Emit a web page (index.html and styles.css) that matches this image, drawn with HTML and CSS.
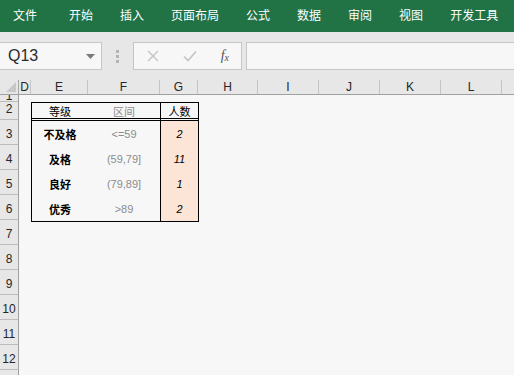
FILE: index.html
```html
<!DOCTYPE html>
<html lang="zh-CN">
<head>
    <meta charset="UTF-8">
    <meta name="viewport" content="width=device-width, initial-scale=1.0">
    <title>成绩统计</title>
    <link rel="stylesheet" href="styles.css">
</head>
<body>
    <!-- 功能区选项卡 -->
    <div class="ribbon">
        <span class="tab tab-file">文件</span>
        <span class="tab">开始</span>
        <span class="tab">插入</span>
        <span class="tab">页面布局</span>
        <span class="tab">公式</span>
        <span class="tab">数据</span>
        <span class="tab">审阅</span>
        <span class="tab">视图</span>
        <span class="tab">开发工具</span>
    </div>

    <!-- 编辑栏 -->
    <div class="formula-bar">
        <div class="name-box">
            <span class="name-text">Q13</span>
            <svg class="drop" width="9" height="5" viewBox="0 0 9 5"><path d="M0 0h9L4.5 5z" fill="#7a7a7a"/></svg>
        </div>
        <div class="grip">
            <svg width="3" height="13" viewBox="0 0 3 13"><rect x="0" y="0" width="3" height="3" fill="#b4b4b4"/><rect x="0" y="5" width="3" height="3" fill="#b4b4b4"/><rect x="0" y="10" width="3" height="3" fill="#b4b4b4"/></svg>
        </div>
        <div class="fx-box">
            <svg width="12" height="12" viewBox="0 0 12 12"><path d="M1 1l10 10M11 1L1 11" stroke="#c4c4c4" stroke-width="1.4" fill="none"/></svg>
            <svg width="14" height="12" viewBox="0 0 14 12"><path d="M1 6.5l4 4L13 1.5" stroke="#c4c4c4" stroke-width="1.6" fill="none"/></svg>
            <span class="fx">f<sub>x</sub></span>
        </div>
        <div class="formula-input"></div>
    </div>

    <!-- 工作表 -->
    <div class="sheet">
        <div class="corner">
            <svg width="10" height="10" viewBox="0 0 10 10"><path d="M10 0v10H0z" fill="#c8c8c8"/></svg>
        </div>
        <div class="col-headers">
            <div class="col c-d">D</div>
            <div class="col c-e">E</div>
            <div class="col c-f">F</div>
            <div class="col c-g">G</div>
            <div class="col c-h">H</div>
            <div class="col c-w">I</div>
            <div class="col c-w">J</div>
            <div class="col c-w">K</div>
            <div class="col c-w">L</div>
            <div class="col c-rest"></div>
        </div>
        <div class="row-headers">
            <div class="rh r-1">1</div>
            <div class="rh r-2">2</div>
            <div class="rh">3</div>
            <div class="rh">4</div>
            <div class="rh">5</div>
            <div class="rh">6</div>
            <div class="rh">7</div>
            <div class="rh">8</div>
            <div class="rh">9</div>
            <div class="rh">10</div>
            <div class="rh">11</div>
            <div class="rh">12</div>
            <div class="rh r-rest"></div>
        </div>
        <div class="cells">
            <div class="grade-table">
                <div class="cell head">等级</div>
                <div class="cell head range">区间</div>
                <div class="cell head count">人数</div>

                <div class="cell grade">不及格</div>
                <div class="cell range">&lt;=59</div>
                <div class="cell count num">2</div>

                <div class="cell grade">及格</div>
                <div class="cell range">(59,79]</div>
                <div class="cell count num">11</div>

                <div class="cell grade">良好</div>
                <div class="cell range">(79,89]</div>
                <div class="cell count num">1</div>

                <div class="cell grade">优秀</div>
                <div class="cell range">&gt;89</div>
                <div class="cell count num">2</div>
            </div>
        </div>
    </div>
</body>
</html>
```

FILE: styles.css
```css
body {
    margin: 0;
    width: 514px;
    height: 375px;
    overflow: hidden;
    background-color: #e7e7e7;
    font-family: "Noto Sans CJK SC", sans-serif;
}

/* 功能区 */
.ribbon {
    height: 32px;
    background-color: #217346;
    display: flex;
    align-items: center;
    padding-left: 13px;
    gap: 27px;
}

.tab {
    color: #fff;
    font-size: 12px;
    line-height: 1;
    margin-top: -2px;
}

.tab-file {
    margin-right: 5px;
}

/* 编辑栏 */
.formula-bar {
    height: 48px;
    display: flex;
    align-items: flex-start;
    padding-top: 10px;
    box-sizing: border-box;
}

.name-box {
    width: 102px;
    height: 28px;
    box-sizing: border-box;
    background: #f7f7f7;
    border: 1px solid #c6c6c6;
    border-left: none;
    display: flex;
    align-items: center;
    justify-content: space-between;
    padding: 0 6px 0 8px;
}

.name-text {
    font-family: "Liberation Sans", sans-serif;
    font-size: 16px;
    color: #2b2b2b;
}

.grip {
    width: 31px;
    height: 28px;
    display: flex;
    align-items: center;
    justify-content: center;
}

.fx-box {
    width: 109px;
    height: 28px;
    box-sizing: border-box;
    background: #f7f7f7;
    border: 1px solid #c6c6c6;
    display: flex;
    align-items: center;
    padding: 0 12px 0 13px;
    justify-content: space-between;
}

.fx {
    font-family: "Liberation Serif", serif;
    font-style: italic;
    font-size: 14px;
    color: #555;
}

.fx sub {
    font-size: 10px;
    vertical-align: -1px;
}

.formula-input {
    flex: 1;
    height: 28px;
    margin-left: 4px;
    box-sizing: border-box;
    background: #f7f7f7;
    border: 1px solid #c6c6c6;
    border-right: none;
}

/* 工作表 */
.sheet {
    display: grid;
    grid-template-columns: 19px 1fr;
    grid-template-rows: 15px 1fr;
    height: 295px;
}

.corner {
    border-right: 1px solid #a8a8a8;
    border-bottom: 1px solid #a0a0a0;
    display: flex;
    align-items: flex-end;
    justify-content: flex-end;
    padding: 0 2px 2px 0;
}

.col-headers {
    display: flex;
    border-bottom: 1px solid #a0a0a0;
}

.col {
    box-sizing: border-box;
    border-right: 1px solid #c4c4c4;
    font-family: "Liberation Sans", sans-serif;
    font-size: 12px;
    color: #262626;
    text-align: center;
    line-height: 14px;
}

.c-d { width: 12px; }
.c-e { width: 57px; }
.c-f { width: 72px; }
.c-g { width: 38px; }
.c-h { width: 60px; }
.c-w { width: 61px; }
.c-rest { flex: 1; border-right: none; }

.row-headers {
    display: flex;
    flex-direction: column;
    border-right: 1px solid #a0a0a0;
}

.rh {
    height: 25px;
    box-sizing: border-box;
    border-bottom: 1px solid #bdbdbd;
    font-family: "Liberation Sans", sans-serif;
    font-size: 12px;
    color: #262626;
    text-align: center;
    display: flex;
    align-items: flex-end;
    justify-content: center;
    padding-bottom: 3px;
    overflow: hidden;
}

.r-1 { height: 7px; padding-bottom: 0; line-height: 10px; }
.r-2 { height: 18px; }
.r-rest { flex: 1; border-bottom: none; }

.cells {
    background: #f7f7f7;
    padding: 7px 0 0 12px;
}

/* 成绩表 */
.grade-table {
    display: grid;
    grid-template-columns: 56px 72px 38px;
    grid-template-rows: 18px repeat(4, 25px);
    width: 168px;
    box-sizing: border-box;
    border: 1px solid #000;
}

.cell {
    display: flex;
    align-items: center;
    justify-content: center;
    font-size: 11px;
    color: #000;
    font-family: "Liberation Sans", "Noto Sans CJK SC", sans-serif;
}

.head {
    border-bottom: 3px double #000;
}

.range {
    color: #8c8c8c;
}

.count {
    border-left: 1px solid #000;
}

.grade {
    font-weight: bold;
}

.num {
    background: #fce4d6;
    font-style: italic;
}
```
